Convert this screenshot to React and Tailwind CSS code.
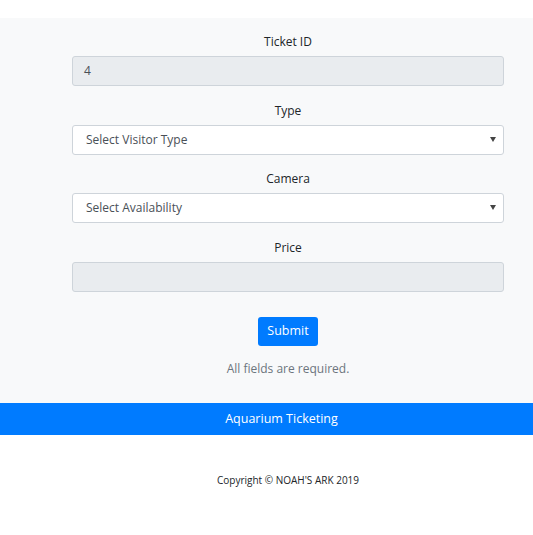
import React from 'react';

const font = { fontFamily: '"Open Sans", "Noto Sans", sans-serif' };

const Label = ({ children }) => (
    <label className="block text-center text-[12px] leading-[19px] text-[#212529] mb-[5px]">{children}</label>
);

const Select = ({ placeholder }) => (
    <div className="relative h-[30px] bg-white border border-[#ced4da] rounded-[3px] flex items-center pl-[13px] text-[12px] text-[#495057]">
        <span>{placeholder}</span>
        <span className="absolute right-[7px] top-[11px] w-0 h-0 border-l-[3px] border-r-[3px] border-t-[5px] border-l-transparent border-r-transparent border-t-[#444]" />
    </div>
);

const App = () => {
    return (
        <div className="min-h-[535px] bg-white" style={font}>
            <div className="h-[18px] bg-white" />
            <section className="bg-[#f8f9fa] pl-[72px] pr-[29px] pt-[14px] pb-[25.5px]">
                <div className="mb-[14.5px]">
                    <Label>Ticket ID</Label>
                    <div className="h-[30px] bg-[#e9ecef] border border-[#ced4da] rounded-[3px] flex items-center pl-[11px] text-[12px] text-[#495057]">4</div>
                </div>
                <div className="mb-[14.5px]">
                    <Label>Type</Label>
                    <Select placeholder="Select Visitor Type" />
                </div>
                <div className="mb-[14.5px]">
                    <Label>Camera</Label>
                    <Select placeholder="Select Availability" />
                </div>
                <div>
                    <Label>Price</Label>
                    <div className="h-[30px] bg-[#e9ecef] border border-[#ced4da] rounded-[3px]" />
                </div>
                <div className="flex justify-center mt-[25px]">
                    <button className="w-[60px] h-[29px] bg-[#007bff] text-white text-[12.5px] rounded-[3px]">Submit</button>
                </div>
                <p className="text-center text-[12px] text-[#6c757d] mt-[13px] leading-[19px]">All fields are required.</p>
            </section>
            <div className="h-[32px] bg-[#007bff] text-white text-[12.5px] flex items-center justify-center pl-[30px]">
                Aquarium Ticketing
            </div>
            <footer className="pt-[38px] pl-[43px] text-center text-[10px] text-[#212529]">
                Copyright © NOAH'S ARK 2019
            </footer>
        </div>
    );
};

export default App;
